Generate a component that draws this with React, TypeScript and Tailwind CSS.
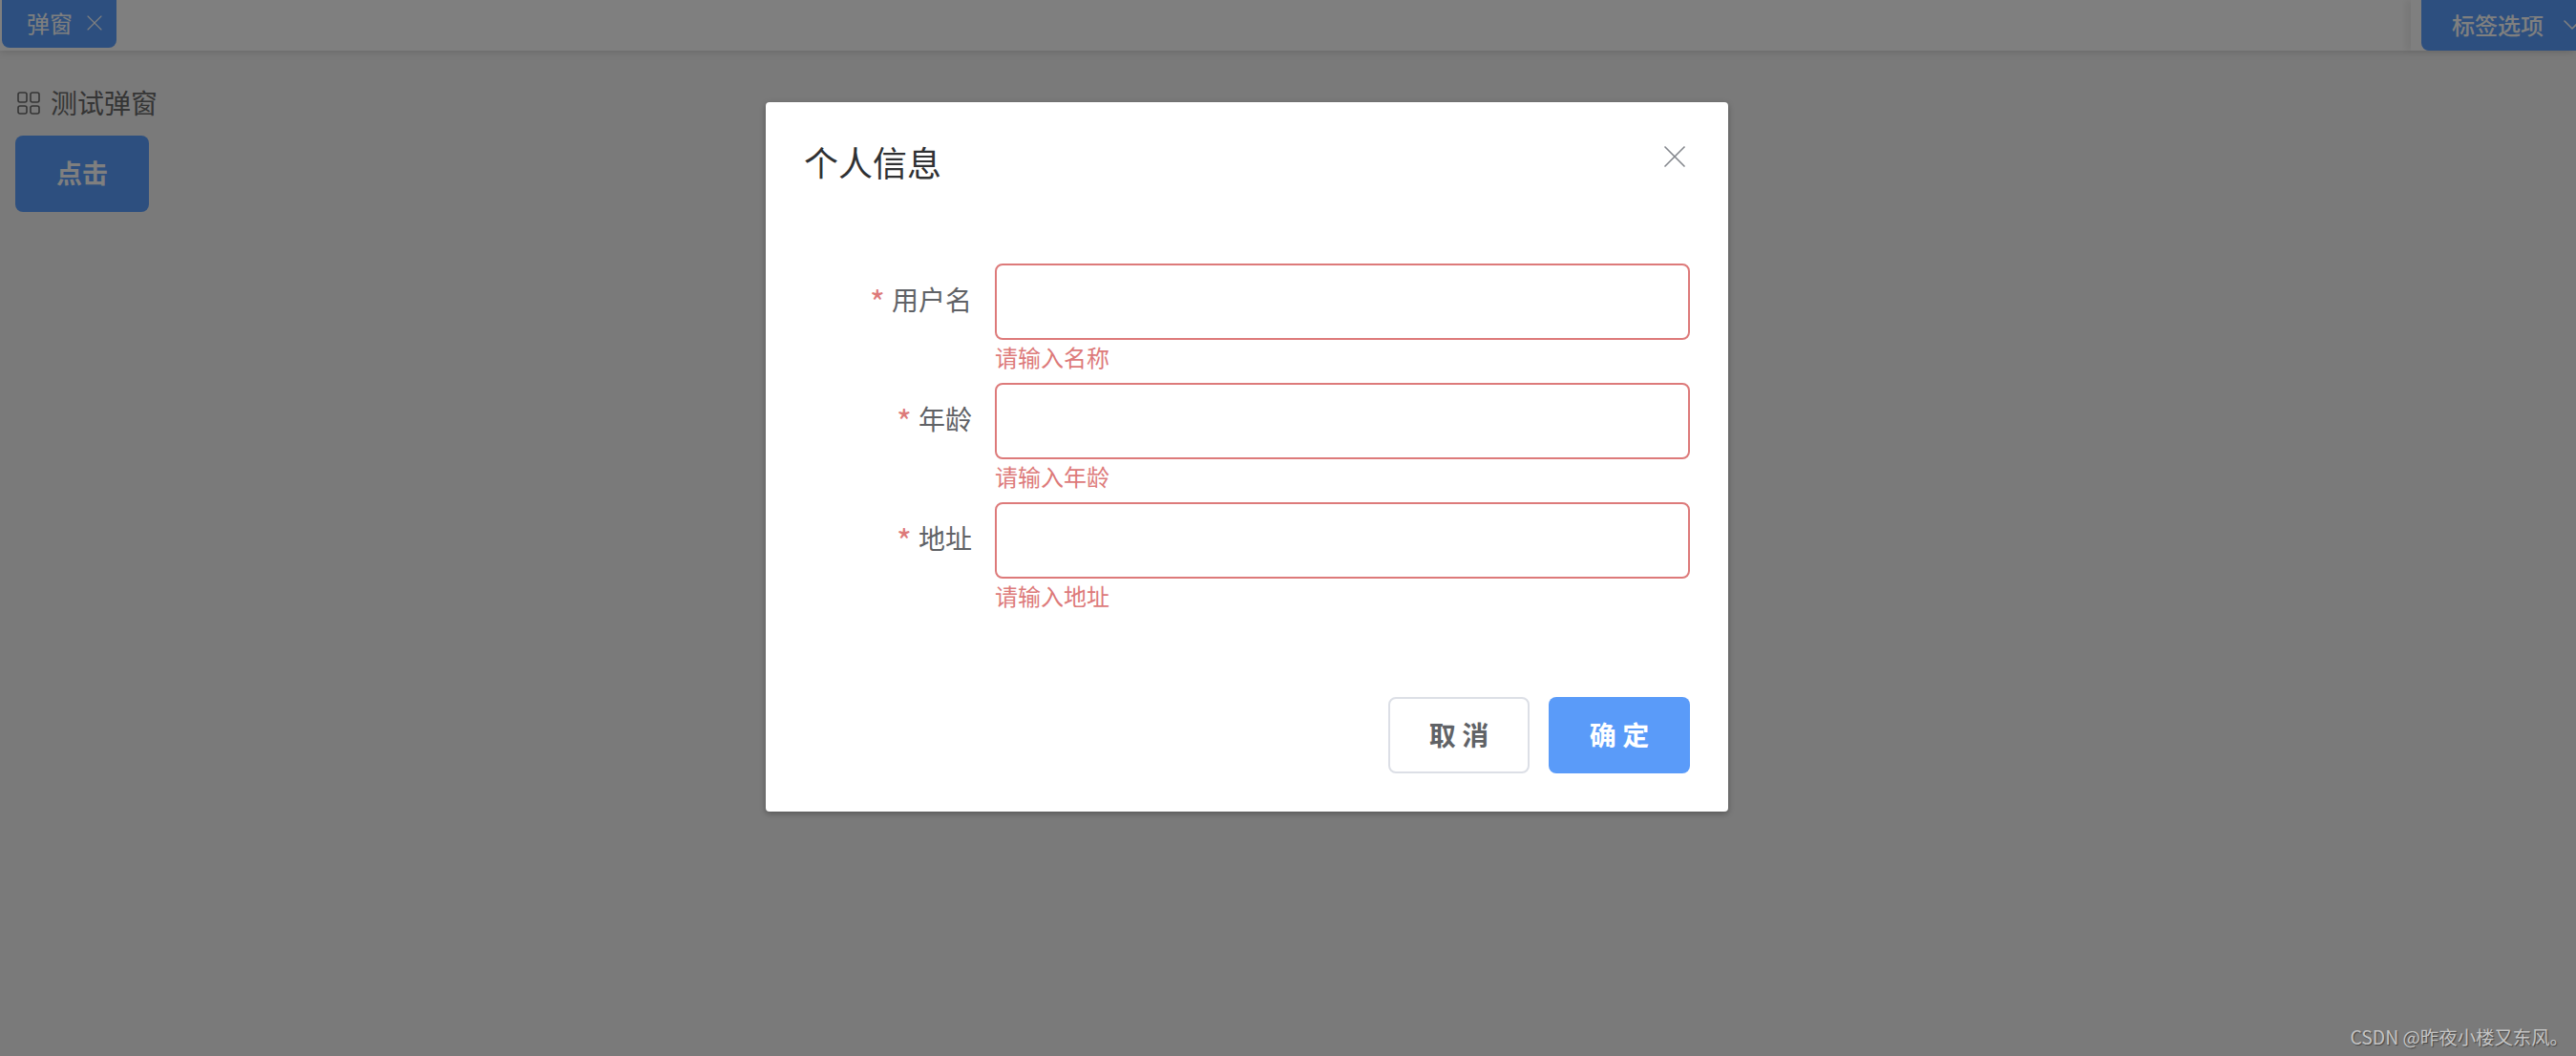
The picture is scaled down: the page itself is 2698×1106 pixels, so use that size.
import { ChevronDown, X } from "lucide-react";

const fields = [
  { label: "用户名", error: "请输入名称" },
  { label: "年龄", error: "请输入年龄" },
  { label: "地址", error: "请输入地址" },
];

const App = () => {
  return (
    <div className="relative h-[1106px] w-[2698px] overflow-hidden bg-[#f4f4f4] font-['Noto_Sans_CJK_SC','Noto_Sans',sans-serif]">
      {/* tab bar */}
      <div className="flex h-[53px] items-start justify-between bg-white shadow-[0_2px_8px_rgba(0,0,0,0.12)]">
        <div className="ml-[2px] flex h-[50px] w-[120px] items-center rounded-b-lg bg-[#5a9fff] pb-[2px] pl-[26px] text-[24px] text-white">
          <span>弹窗</span>
          <X className="ml-[9px] h-[28px] w-[28px] text-white" strokeWidth={1} />
        </div>
        <div className="flex h-[53px] w-[173px] justify-end shadow-[-6px_0_6px_rgba(0,0,0,0.06)]">
          <div className="flex h-[53px] w-[162px] items-center overflow-hidden rounded-bl-lg bg-[#5a9fff] pb-[2px] pl-[32px] text-[24px] font-medium text-white">
            <span className="shrink-0">标签选项</span>
            <ChevronDown className="ml-[14px] h-[32px] w-[32px] shrink-0 text-white" strokeWidth={1.2} />
          </div>
        </div>
      </div>

      {/* page content */}
      <div className="pl-[16px] pt-[38px]">
        <div className="flex h-[34px] items-center text-[28px] text-[#6b6b6b]">
          <svg className="ml-[2px] h-[24px] w-[24px]" viewBox="0 0 24 24" fill="none" stroke="currentColor" strokeWidth="1.6">
            <rect x="1" y="1" width="9" height="10" rx="2" />
            <rect x="14" y="1" width="9" height="10" rx="2" />
            <rect x="1" y="15" width="9" height="8" rx="2" />
            <rect x="14" y="15" width="9" height="8" rx="2" />
          </svg>
          <span className="mb-[3px] ml-[11px]">测试弹窗</span>
        </div>
        <button className="mt-[17px] h-[80px] w-[140px] rounded-lg bg-[#5a9fff] pb-[2px] text-[27px] font-bold text-white">
          点击
        </button>
      </div>

      {/* overlay + dialog */}
      <div className="absolute inset-0 bg-black/50">
        <div className="ml-[802px] mt-[107px] h-[743px] w-[1008px] rounded-[4px] bg-white px-[40px] pt-[39px] shadow-[0_2px_6px_rgba(0,0,0,0.3)]">
          <div className="flex h-[46px] items-start justify-between">
            <span className="text-[36px] leading-[46px] text-[#303133]">个人信息</span>
            <X className="mr-[-4px] mt-[-2px] h-[40px] w-[40px] text-[#83868c]" strokeWidth={1} />
          </div>

          <div className="mt-[84px] flex flex-col gap-[45px]">
            {fields.map((f) => (
              <div key={f.label} className="flex">
                <label className="flex h-[80px] w-[200px] items-center justify-end pb-[6px] pr-[24px] text-[28px] text-[#606266]">
                  <span className="mr-[7px] mt-[6px] text-[34px] leading-none text-[#dd7a7a]">*</span>
                  {f.label}
                </label>
                <div className="relative w-[728px]">
                  <div className="h-[80px] rounded-lg border-2 border-[#dd7a7a] bg-white" />
                  <div className="absolute left-0 top-[82px] text-[24px] leading-[32px] text-[#dd7a7a]">{f.error}</div>
                </div>
              </div>
            ))}
          </div>

          <div className="mt-[124px] flex justify-end gap-[20px]">
            <button className="h-[80px] w-[148px] rounded-lg border-2 border-[#dcdfe6] bg-white pb-[3px] text-[28px] font-bold text-[#606266]">
              取 消
            </button>
            <button className="h-[80px] w-[148px] rounded-lg bg-[#5a9bf9] pb-[3px] text-[28px] font-bold text-white">
              确 定
            </button>
          </div>
        </div>
      </div>

      {/* watermark */}
      <div className="absolute bottom-[7px] right-[8px] text-[19.4px] leading-[26px] text-[#c4c4c4] [text-shadow:1px_1px_1px_rgba(0,0,0,0.45)]">
        CSDN @昨夜小楼又东风。
      </div>
    </div>
  );
};

export default App;
